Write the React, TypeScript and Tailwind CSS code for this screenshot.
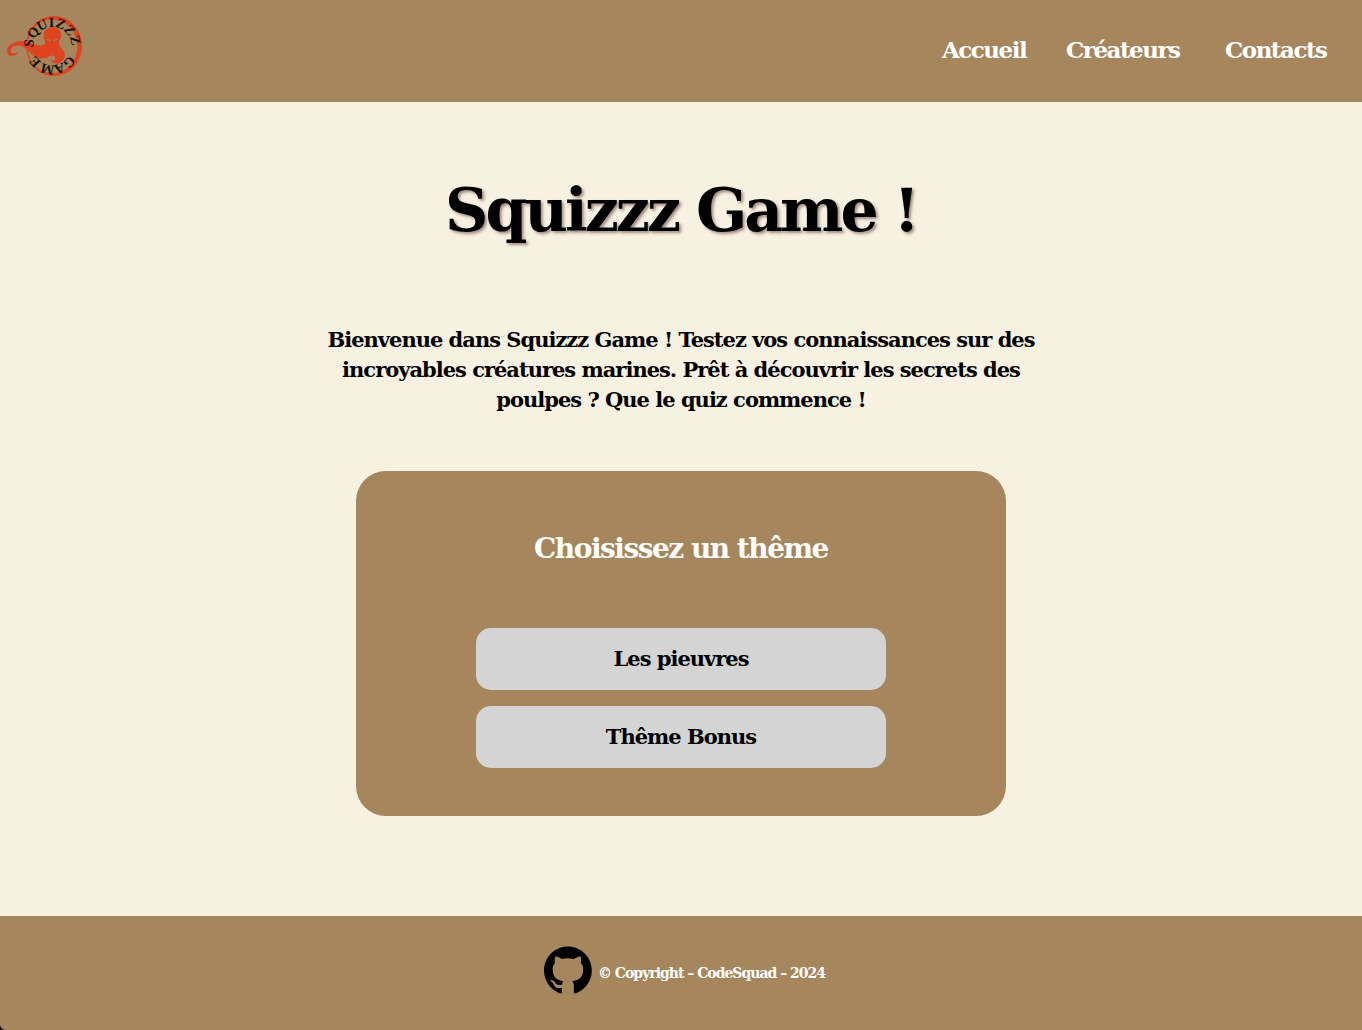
import React from "react";

const letters: [string, number][] = [
  ["S", -83], ["Q", -55], ["U", -26], ["I", -2], ["Z", 21], ["Z", 48], ["Z", 76],
  ["G", 134], ["A", 162], ["M", 192], ["E", 228],
];

function Logo() {
  return (
    <svg viewBox="0 0 300 285" className="h-[95px] w-[100px] shrink-0" aria-label="Squizzz Game">
      <path
        fillRule="evenodd"
        fill="#de4420"
        d="M162 30a84 90 0 1 0 .1 0zM157 41a75 80 0 1 1 -.1 0z"
      />
      <path
        fill="#de4420"
        d="M157 63c-17 0-27 12-26 27 0 10 6 15 4 22-4 10-19 8-32 3-16-6-28-12-45-9-19 2-33 11-37 25-3 14 10 22 23 17 7-3 9-8 8-13-3 6-8 9-14 7-7-3-8-10-2-16 9-9 26-10 38 0 14 10 22 24 38 29 14 5 27 1 38-5 8-4 17 0 16 8-1 6-9 7-15 4 2 10 19 14 31 7 13-8 17-23 7-36-7-10-15-16-12-26 3-8 7-12 6-21-1-14-11-23-26-23z"
      />
      <path d="M140 99l13 6M173 99l-13 6" stroke="#a5865d" strokeWidth="3" fill="none" />
      <g fill="#17110b" fontFamily="'Liberation Serif', serif" fontSize="42" textAnchor="middle">
        {letters.map(([c, a], i) => (
          <text key={i} x="157" y="63" transform={`rotate(${a} 157 120)`}>{c}</text>
        ))}
      </g>
    </svg>
  );
}

function GithubMark() {
  return (
    <svg viewBox="0 0 98 96" className="h-12 w-12 shrink-0" aria-label="GitHub">
      <path
        fillRule="evenodd"
        clipRule="evenodd"
        d="M48.854 0C21.839 0 0 22 0 49.217c0 21.756 13.993 40.172 33.405 46.69 2.427.49 3.316-1.059 3.316-2.362 0-1.141-.08-5.052-.08-9.127-13.59 2.934-16.42-5.867-16.42-5.867-2.184-5.704-5.42-7.17-5.42-7.17-4.448-3.015.324-3.015.324-3.015 4.934.326 7.523 5.052 7.523 5.052 4.367 7.496 11.404 5.378 14.235 4.074.404-3.178 1.699-5.378 3.074-6.6-10.839-1.141-22.243-5.378-22.243-24.283 0-5.378 1.94-9.778 5.014-13.2-.485-1.222-2.184-6.275.486-13.038 0 0 4.125-1.304 13.426 5.052a46.97 46.97 0 0 1 12.214-1.63c4.125 0 8.33.571 12.213 1.63 9.302-6.356 13.427-5.052 13.427-5.052 2.67 6.763.97 11.816.485 13.038 3.155 3.422 5.015 7.822 5.015 13.2 0 18.905-11.404 23.06-22.324 24.283 1.78 1.548 3.316 4.481 3.316 9.126 0 6.6-.08 11.897-.08 13.526 0 1.304.89 2.853 3.316 2.364 19.412-6.52 33.405-24.935 33.405-46.691C97.707 22 75.788 0 48.854 0z"
      />
    </svg>
  );
}

export default function App() {
  return (
    <div className="flex h-[1030px] flex-col overflow-hidden bg-[#f7f1e1] font-['DejaVu_Serif',serif] font-bold text-black">
      <header className="flex h-[102px] shrink-0 items-center justify-between bg-[#a5865d] pr-[31px] pt-[13px] pb-[8px]">
        <Logo />
        <nav className="flex -translate-y-1 gap-9 text-[23px] leading-8 whitespace-nowrap text-white">
          <a className="w-[88px] tracking-[-1.5px]">Accueil</a>
          <a className="w-[123px] tracking-[-1.5px]">Créateurs</a>
          <a className="w-[106px] tracking-[-1.5px]">Contacts</a>
        </nav>
      </header>

      <main className="flex flex-1 flex-col items-center">
        <h1 className="mt-[68px] h-20 text-[60px] leading-20 tracking-[-3px] whitespace-nowrap [text-shadow:2px_2px_3px_#a08a80]">
          Squizzz Game !
        </h1>
        <div className="mt-[75px] flex flex-col items-center text-[21px] leading-[30px] whitespace-nowrap">
          <p className="tracking-[-1px]">Bienvenue dans Squizzz Game ! Testez vos connaissances sur des</p>
          <p className="tracking-[-1px]">incroyables créatures marines. Prêt à découvrir les secrets des</p>
          <p className="tracking-[-1px]">poulpes ? Que le quiz commence !</p>
        </div>
        <section className="mt-14 flex h-[345px] w-[650px] flex-col items-center rounded-[30px] bg-[#a5865d] pt-[58px]">
          <h2 className="h-10 text-[28px] leading-10 tracking-[-1.5px] text-white">Choisissez un thême</h2>
          <div className="mt-[59px] flex flex-col gap-4 text-[21px]">
            <button className="h-[62px] w-[410px] rounded-[15px] bg-[#d4d4d4] tracking-[-1px]">Les pieuvres</button>
            <button className="h-[62px] w-[410px] rounded-[15px] bg-[#d4d4d4] tracking-[-1px]">Thême Bonus</button>
          </div>
        </section>
      </main>

      <footer className="relative flex h-[114px] shrink-0 items-start justify-center gap-[6px] bg-[#a5865d] pt-[30px] pl-[6px]">
        <GithubMark />
        <p className="mt-[17px] w-[226px] text-[14px] leading-5 tracking-[-1px] whitespace-nowrap text-white">© Copyright – CodeSquad – 2024</p>
        <svg viewBox="0 0 5 5" className="absolute bottom-0 left-0 h-[5px] w-[5px]">
          <path d="M0 0Q1 4 5 5H0z" fill="#15120e" />
        </svg>
      </footer>
    </div>
  );
}
